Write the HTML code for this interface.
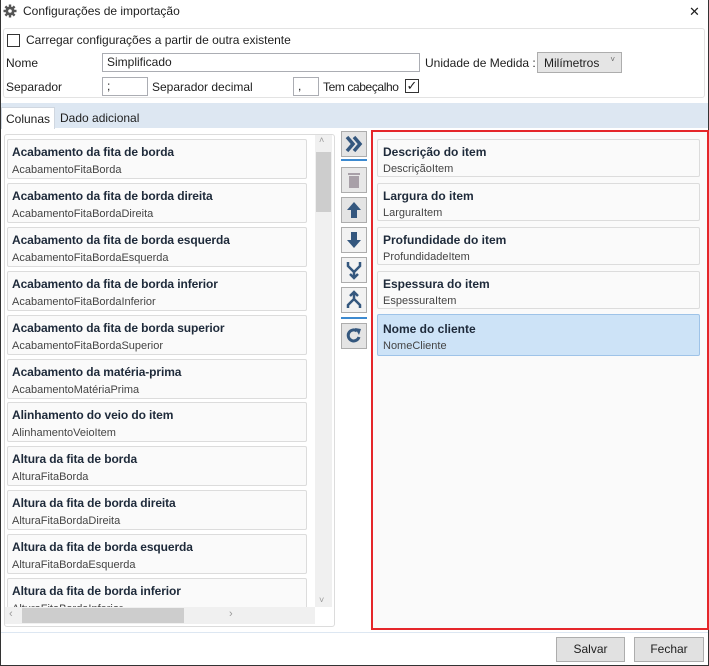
<!DOCTYPE html>
<html><head><meta charset="utf-8"><style>
*{box-sizing:border-box;margin:0;padding:0}
body{width:709px;height:666px;font-family:"Liberation Sans",sans-serif;font-size:12px;color:#1e1e1e;background:#fff;position:relative;overflow:hidden}
.win{position:absolute;left:0;top:0;width:709px;height:666px;border:1px solid #333;border-top:none}
.a{position:absolute}
.inp{position:absolute;border:1px solid #abadb3;background:#fff;height:19px;padding:1px 4px;font-size:12px}
.item{position:absolute;left:6px;width:300px;height:40px;border:1px solid #dcdcdc;border-radius:2px;background:#fafafa;padding:4px 4px}
.item b{display:block;font-size:12px;color:#1e2a3a;margin-top:1px;letter-spacing:-0.1px}
.item span{display:block;font-size:11px;color:#444;margin-top:5px}
.ri{position:absolute;left:4px;width:323px;height:38px;border:1px solid #dcdcdc;border-radius:2px;background:#fafafa;padding:4px 5px}
.ri b{display:block;font-size:12px;color:#1e2a3a;margin-top:1px}
.ri span{display:block;font-size:11px;color:#444;margin-top:4px}
.tb{position:absolute;left:341px;width:26px;height:26px;border:1px solid #adadad;background:#e4e4e4}
.tb svg{position:absolute;left:2px;top:2px}
.btn{position:absolute;top:637px;height:25px;border:1px solid #adadad;background:#e1e1e1;text-align:center;line-height:23px;font-size:12px}
</style></head><body>
<div class="win"></div>
<svg class="a" style="left:3px;top:4px" width="14" height="14" viewBox="0 0 14 14"><g fill="#555"><circle cx="7" cy="7" r="4.5"/><rect x="5.8" y="0.5" width="2.4" height="13"/><rect x="0.5" y="5.8" width="13" height="2.4"/><rect x="5.8" y="0.5" width="2.4" height="13" transform="rotate(45 7 7)"/><rect x="5.8" y="0.5" width="2.4" height="13" transform="rotate(-45 7 7)"/></g><circle cx="7" cy="7" r="1.8" fill="#fff"/></svg>
<div class="a" style="left:23px;top:4px;font-size:12px">Configurações de importação</div>
<div class="a" style="left:689px;top:4px;font-size:13px">✕</div>
<div class="a" style="left:3px;top:28px;width:702px;height:70px;border:1px solid #e3e3e3;border-radius:3px"></div>
<div class="a" style="left:7px;top:34px;width:13px;height:13px;border:1px solid #333;background:#fff"></div>
<div class="a" style="left:26px;top:33px">Carregar configurações a partir de outra existente</div>
<div class="a" style="left:6px;top:56px">Nome</div>
<div class="inp" style="left:102px;top:53px;width:318px">Simplificado</div>
<div class="a" style="left:425px;top:56px">Unidade de Medida :</div>
<div class="a" style="left:537px;top:52px;width:85px;height:21px;border:1px solid #adadad;background:#e5e5e5;padding:3px 6px">Milímetros<span style="position:absolute;right:6px;top:2px;font-size:8px;color:#666">˅</span></div>
<div class="a" style="left:6px;top:80px">Separador</div>
<div class="inp" style="left:102px;top:77px;width:46px">;</div>
<div class="a" style="left:152px;top:80px">Separador decimal</div>
<div class="inp" style="left:293px;top:77px;width:26px">,</div>
<div class="a" style="left:323px;top:80px;letter-spacing:-0.4px">Tem cabeçalho</div>
<div class="a" style="left:405px;top:79px;width:14px;height:14px;border:1px solid #333;background:#fff;font-size:13px;line-height:12px;text-align:center">✓</div>
<div class="a" style="left:1px;top:103px;width:707px;height:25px;background:#dde7f2"></div>
<div class="a" style="left:1px;top:107px;width:54px;height:22px;background:#fff;border:1px solid #d0d7e0;border-bottom:none;padding:4px 4px">Colunas</div>
<div class="a" style="left:60px;top:111px">Dado adicional</div>
<div class="a" style="left:4px;top:134px;width:331px;height:493px;border:1px solid #dcdcdc;border-radius:3px;overflow:hidden">
<div class="a" style="left:0;top:0;width:310px;height:472px;overflow:hidden">
<div class="item" style="top:4px;left:2px"><b>Acabamento da fita de borda</b><span>AcabamentoFitaBorda</span></div>
<div class="item" style="top:48px;left:2px"><b>Acabamento da fita de borda direita</b><span>AcabamentoFitaBordaDireita</span></div>
<div class="item" style="top:92px;left:2px"><b>Acabamento da fita de borda esquerda</b><span>AcabamentoFitaBordaEsquerda</span></div>
<div class="item" style="top:136px;left:2px"><b>Acabamento da fita de borda inferior</b><span>AcabamentoFitaBordaInferior</span></div>
<div class="item" style="top:180px;left:2px"><b>Acabamento da fita de borda superior</b><span>AcabamentoFitaBordaSuperior</span></div>
<div class="item" style="top:224px;left:2px"><b>Acabamento da matéria-prima</b><span>AcabamentoMatériaPrima</span></div>
<div class="item" style="top:267px;left:2px"><b>Alinhamento do veio do item</b><span>AlinhamentoVeioItem</span></div>
<div class="item" style="top:311px;left:2px"><b>Altura da fita de borda</b><span>AlturaFitaBorda</span></div>
<div class="item" style="top:355px;left:2px"><b>Altura da fita de borda direita</b><span>AlturaFitaBordaDireita</span></div>
<div class="item" style="top:399px;left:2px"><b>Altura da fita de borda esquerda</b><span>AlturaFitaBordaEsquerda</span></div>
<div class="item" style="top:443px;left:2px"><b>Altura da fita de borda inferior</b><span>AlturaFitaBordaInferior</span></div>
</div>
<div class="a" style="left:310px;top:0;width:17px;height:472px;background:#f0f0f0"><div class="a" style="left:1px;top:17px;width:15px;height:60px;background:#cdcdcd"></div><div class="a" style="left:4px;top:0;font-size:9px;color:#999">˄</div><div class="a" style="left:4px;bottom:2px;font-size:9px;color:#999">˅</div></div>
<div class="a" style="left:0;top:472px;width:310px;height:17px;background:#f0f0f0"><div class="a" style="left:17px;top:1px;width:162px;height:15px;background:#cdcdcd"></div><div class="a" style="left:4px;top:1px;font-size:11px;color:#999">‹</div><div class="a" style="left:224px;top:1px;font-size:11px;color:#999">›</div></div>
</div>
<div class="tb" style="top:131px"><svg width="20" height="20" viewBox="0 0 20 20"><path d="M3 3l6 7-6 7M10 3l6 7-6 7" stroke="#34577e" stroke-width="3.5" fill="none"/></svg></div>
<div class="a" style="left:341px;top:159px;width:26px;height:2px;background:#3d8ad0"></div>
<div class="tb" style="top:167px;background:#e8e8e8"><svg width="20" height="20" viewBox="0 0 20 20"><rect x="4" y="3" width="12" height="2" fill="#a8a0a8"/><rect x="5" y="6" width="10" height="12" fill="#a8a0a8"/></svg></div>
<div class="tb" style="top:197px"><svg width="20" height="20" viewBox="0 0 20 20"><path d="M10 2l7 8h-4v8h-6v-8h-4z" fill="#34577e"/></svg></div>
<div class="tb" style="top:227px;background:#f2f2f2"><svg width="20" height="20" viewBox="0 0 20 20"><path d="M10 18l7-8h-4v-8h-6v8h-4z" fill="#34577e"/></svg></div>
<div class="tb" style="top:257px;background:#f2f2f2"><svg width="20" height="20" viewBox="0 0 20 20"><path d="M4 2v4l6 6 6-6v-4M10 12v6M6 14l4 4 4-4" stroke="#34577e" stroke-width="2.5" fill="none"/></svg></div>
<div class="tb" style="top:287px;background:#f2f2f2"><svg width="20" height="20" viewBox="0 0 20 20"><path d="M10 2v7l-6 6v3M10 9l6 6v3M6 6l4-4 4 4" stroke="#34577e" stroke-width="2.5" fill="none"/></svg></div>
<div class="a" style="left:341px;top:317px;width:26px;height:2px;background:#3d8ad0"></div>
<div class="tb" style="top:323px"><svg width="20" height="20" viewBox="0 0 20 20"><path d="M15 11a5.5 5.5 0 1 1-2-6" stroke="#34577e" stroke-width="3" fill="none"/><path d="M11 2l6 1-2 6z" fill="#34577e"/></svg></div>
<div class="a" style="left:371px;top:130px;width:338px;height:500px;border:2px solid #e5262a;background:#fafafa">
<div class="ri" style="top:7px"><b>Descrição do item</b><span>DescriçãoItem</span></div>
<div class="ri" style="top:51px"><b>Largura do item</b><span>LarguraItem</span></div>
<div class="ri" style="top:95px"><b>Profundidade do item</b><span>ProfundidadeItem</span></div>
<div class="ri" style="top:139px"><b>Espessura do item</b><span>EspessuraItem</span></div>
<div class="ri" style="top:182px;height:42px;background:#cde3f7;border-color:#9ec3e8;padding-top:6px"><b>Nome do cliente</b><span>NomeCliente</span></div>
</div>
<div class="a" style="left:1px;top:632px;width:707px;height:1px;background:#dde7f2"></div>
<div class="btn" style="left:556px;width:69px">Salvar</div>
<div class="btn" style="left:634px;width:70px">Fechar</div>
</body></html>
